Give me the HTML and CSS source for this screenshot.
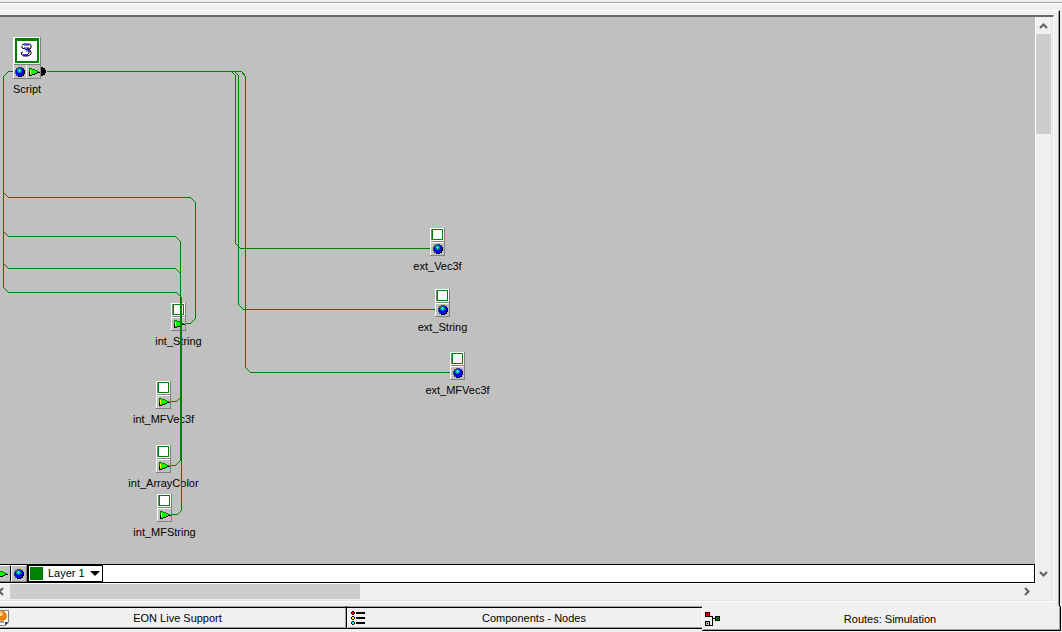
FILE: index.html
```html
<!DOCTYPE html>
<html lang="en">
<head>
<meta charset="utf-8">
<title>Routes: Simulation</title>
<link rel="stylesheet" href="styles.css">
</head>
<body>
<svg class="defs" width="0" height="0" aria-hidden="true">
  <symbol id="ball" viewBox="0 0 10 10">
    <path fill="#404060" d="M3 0h4v1h2v2h1v4h-1v2h-2v1h-4v-1h-2v-2h-1v-4h1v-2h2z"/>
    <path fill="#000" d="M8 2h1v1h1v4h-1v2h-2v1h-4v-1h4v-1h1z"/>
    <path fill="#00f" d="M3 1h4v1h1v1h1v3h-1v1h-1v2h-4v-1h-1v-1h-1v-4h1v-1h1z"/>
    <path fill="#008080" d="M3 1h3v1h1v3h-1v1h-3v-1h-1v-3h1z"/>
    <path fill="#0ff" d="M3 3h1v-1h1v1h1v1h-1v1h-1v-1h-1z"/>
  </symbol>
  <symbol id="arrow" viewBox="0 0 11 10">
    <path fill="#008000" d="M0 1h3v1h3v1h2v1h2v1h-10z"/>
    <path fill="#000" d="M0 5h11v1h-3v1h-2v1h-3v1h-3z"/>
    <path fill="#0f0" d="M1 2h2v1h3v1h2v2h-2v1h-3v1h-2z"/>
    <path fill="#ff0" d="M1 3h1v4h-1z"/>
  </symbol>
  <symbol id="box" viewBox="0 0 15 28">
    <path fill="#808080" d="M0 0h15v28h-15z"/>
    <path fill="#fff" d="M0 0h14v27h-14z"/>
    <path fill="#808080" d="M1 1h12v11h-12z"/>
    <path fill="#008000" d="M2 1h11v11h-11z"/>
    <path fill="#fff" d="M3 2h9v9h-9z"/>
    <path fill="#808080" d="M1 13h13v1h-13z"/>
    <path fill="#c0c0c0" d="M1 15h13v12h-13z"/>
  </symbol>
  <symbol id="in-node" viewBox="0 0 15 28">
    <use href="#box" width="15" height="28"/>
    <use href="#ball" x="3" y="16" width="10" height="10"/>
  </symbol>
  <symbol id="out-node" viewBox="0 0 15 28">
    <use href="#box" width="15" height="28"/>
    <use href="#arrow" x="3" y="16" width="11" height="10"/>
  </symbol>
</svg>

<div class="window">
  <div class="top-edge"></div>
  <main class="panel">
    <div class="view">
      <section class="canvas" aria-label="Routes">
        <div class="node script">
          <svg width="34" height="42" shape-rendering="crispEdges" aria-hidden="true">
            <path fill="#808080" d="M0 0h28v42h-28z"/>
            <path fill="#fff" d="M0 0h27v41h-27z"/>
            <path fill="#008000" d="M2 1h24v25h-24z"/>
            <path fill="#fff" d="M4 4h20v20h-20z"/>
            <path fill="#808080" d="M1 27h26v1h-26z"/>
            <path fill="#c0c0c0" d="M1 28h12v13h-12zM14 28h13v13h-13z"/>
            <g fill="none" stroke="#808080" stroke-width="1" shape-rendering="auto">
              <path stroke="#000" d="M9 8l2-1h5l2 1v3l-2 1M9 9v2l3 1 4 1v3l-2 2h-5l-1-2 2-1M14 11l3 2 1 2v2l-3 2h-5"/>
              <path stroke="#00f" d="M11 8h5M11 11h5M13 14h4M10 18h5"/>
            </g>
            <use href="#ball" x="2" y="30" width="10" height="10"/>
            <use href="#arrow" x="16" y="30" width="11" height="10"/>
            <path fill="#000" d="M28 30h2v1h2v2h1v3h-1v2h-2v1h-2z"/>
          </svg>
          <span>Script</span>
        </div>
        <div class="node ext-vec"><svg width="15" height="28" shape-rendering="crispEdges"><use href="#in-node"/></svg><span>ext_Vec3f</span></div>
        <div class="node ext-string"><svg width="15" height="28" shape-rendering="crispEdges"><use href="#in-node"/></svg><span>ext_String</span></div>
        <div class="node ext-mfvec"><svg width="15" height="28" shape-rendering="crispEdges"><use href="#in-node"/></svg><span>ext_MFVec3f</span></div>
        <div class="node int-string"><svg width="15" height="28" shape-rendering="crispEdges"><use href="#out-node"/></svg><span>int_String</span></div>
        <div class="node int-mfvec"><svg width="15" height="28" shape-rendering="crispEdges"><use href="#out-node"/></svg><span>int_MFVec3f</span></div>
        <div class="node int-color"><svg width="15" height="28" shape-rendering="crispEdges"><use href="#out-node"/></svg><span>int_ArrayColor</span></div>
        <div class="node int-mfstring"><svg width="15" height="28" shape-rendering="crispEdges"><use href="#out-node"/></svg><span>int_MFString</span></div>
        <svg class="routes" shape-rendering="crispEdges" aria-hidden="true">
          <g transform="translate(.5 -16.5)" fill="none" stroke="#008000">
            <path d="M46 71H241L245 76V367L250 372H449"/>
            <path d="M231 71L235 75V243L240 248H429"/>
            <path d="M234 71L238 75V304L243 309H434"/>
            <path d="M12 71H8L3 76V287L8 292H176L181 297V510L177 514H170"/>
            <path d="M3 192L8 197H190L195 202V318L190 323H185"/>
            <path d="M3 231L8 236H175L180 241V460L175 465H169"/>
            <path d="M3 263L8 268H175L180 273"/>
            <path d="M180 397L176 401H169"/>
          </g>
        </svg>
      </section>
      <div class="layer-bar">
        <button class="port out" aria-label="Outputs"><svg width="11" height="10" shape-rendering="crispEdges"><use href="#arrow"/></svg></button>
        <button class="port" aria-label="Inputs"><svg width="10" height="10" shape-rendering="crispEdges"><use href="#ball"/></svg></button>
        <div class="layer">
          <span class="swatch"></span>
          <select aria-label="Layer"><option>Layer 1</option></select>
          <svg width="10" height="5" aria-hidden="true"><path d="M0 0h10l-5 5z"/></svg>
        </div>
      </div>
      <div class="vscroll">
        <button aria-label="Scroll up"><svg width="9" height="7"><path d="M1 6l3.500-3.500 3.500 3.500"/></svg></button>
        <div class="vthumb"></div>
        <button class="end" aria-label="Scroll down"><svg width="9" height="7"><path d="M1 1l3.500 3.500 3.500-3.500"/></svg></button>
      </div>
      <div class="hscroll">
        <button aria-label="Scroll left"><svg width="7" height="9"><path d="M5 1l-3.500 3.500 3.500 3.500"/></svg></button>
        <div class="hthumb"></div>
        <button class="end" aria-label="Scroll right"><svg width="7" height="9"><path d="M2 1l3.500 3.500-3.500 3.500"/></svg></button>
      </div>
    </div>
  </main>
  <nav class="tabs" role="tablist">
    <button class="tab support" role="tab">
      <svg width="9" height="16" aria-hidden="true">
        <path fill="#fff" stroke="#808080" d="M-1 .5h9.500v11l-4 4h-6z"/>
        <path fill="#404040" d="M9 12l-4 4v-4z"/>
        <circle cx="2" cy="6" r="5" fill="#f08000"/>
        <circle cx="1" cy="4" r="2" fill="#ffd080"/>
        <path fill="#a0a0a0" d="M0 11h4v2h-4z"/>
      </svg>
      <span>EON Live Support</span>
    </button>
    <button class="tab components" role="tab">
      <svg width="15" height="15" shape-rendering="crispEdges" aria-hidden="true">
        <path d="M1 0h2v1h1v2h-1v1h-2v-1h-1v-2h1zM1 5h2v1h1v2h-1v1h-2v-1h-1v-2h1zM1 10h2v1h1v2h-1v1h-2v-1h-1v-2h1zM5 1h9v2h-9zM5 6h9v2h-9zM5 11h9v2h-9z"/>
        <path fill="#f00" d="M1 1h2v2h-2z"/><path fill="#ff0" d="M1 6h2v2h-2z"/><path fill="#0ff" d="M1 11h2v2h-2z"/>
      </svg>
      <span>Components - Nodes</span>
    </button>
    <button class="tab active" role="tab" aria-selected="true">
      <svg width="15" height="15" shape-rendering="crispEdges" aria-hidden="true">
        <path d="M0 0h5v5h-5zM0 9h5v5h-5zM10 4h5v5h-5zM5 4h3v2h2v1h-2v7h-3v-1h2v-8h-2z"/>
        <path fill="#f00" d="M1 1h3v3h-3z"/><path fill="#c0c0c0" d="M1 10h3v3h-3z"/><path fill="#008000" d="M11 5h3v3h-3z"/>
        <path d="M2 2h1v1h-1zM2 11h1v1h-1zM12 6h1v1h-1z"/>
      </svg>
      <span>Routes: Simulation</span>
    </button>
  </nav>
</div>
</body>
</html>
```
FILE: styles.css
```css
* { box-sizing: border-box; }
body {
  margin: 0;
  background: #f0f0f0;
  color: #000;
  font: 11px/13px "Liberation Sans", Arial, sans-serif;
}
button, select {
  font: inherit;
  color: inherit;
  margin: 0;
  padding: 0;
  border: 0;
  background: none;
}
svg { display: block; flex: none; }
.defs { position: absolute; }
.window {
  height: 100vh;
  display: flex;
  flex-direction: column;
  overflow: hidden;
  padding: 2px 2px 1px 0;
}
.top-edge {
  height: 8px;
  flex: none;
  margin-right: -2px;
  border-top: 1px solid #a0a0a0;
  box-shadow: inset 0 1px #fff;
}
.panel {
  flex: 1;
  min-height: 0;
  display: flex;
  padding: 4px 5px 4px 0;
  border-top: 1px solid #fff;
  border-right: 1px solid #000;
  box-shadow: inset -1px 0 #a0a0a0;
}
.view {
  flex: 1;
  min-width: 0;
  display: grid;
  grid-template-columns: minmax(0, 1fr) 17px;
  grid-template-rows: minmax(0, 1fr) 19px 17px;
  border-top: 2px solid #696969;
  border-right: 1px solid #fff;
  border-bottom: 1px solid #fff;
  box-shadow: inset -1px -1px #e3e3e3;
  padding: 0 1px 1px 0;
}
.canvas {
  position: relative;
  overflow: hidden;
  background: #c0c0c0;
}
.routes {
  position: absolute;
  inset: 0;
  width: 100%;
  height: 100%;
  pointer-events: none;
}
.node {
  position: absolute;
  width: 15px;
  display: flex;
  flex-direction: column;
  align-items: center;
  gap: 4px;
  white-space: nowrap;
}
.script { left: 13px; top: 20px; width: 28px; }
.script svg { align-self: flex-start; }
.ext-vec { left: 430px; top: 211px; }
.ext-string { left: 435px; top: 272px; }
.ext-mfvec { left: 450px; top: 335px; }
.int-string { left: 171px; top: 286px; }
.int-mfvec { left: 156px; top: 364px; }
.int-color { left: 156px; top: 428px; }
.int-mfstring { left: 157px; top: 477px; }

.layer-bar {
  display: flex;
  background: #fff;
  border: solid #000;
  border-width: 1px 1px 1px 0;
}
.port {
  width: 16px;
  display: grid;
  place-items: center;
  background: #c0c0c0;
  border: 1px solid #fff;
  border-right-color: #808080;
  border-bottom-color: #808080;
}
.port.out {
  width: 11px;
  justify-content: end;
  padding-right: 2px;
  border-left: 0;
  border-right-color: #000;
}
.layer {
  display: grid;
  grid-template-columns: 13px 1fr 10px;
  align-items: center;
  width: 76px;
  padding: 0 2px 0 1px;
  border: solid #000;
  border-width: 1px 1px 1px 2px;
}
.swatch { height: 13px; background: #008000; }
.layer select {
  grid-area: 1 / 2 / 2 / 4;
  appearance: none;
  padding-left: 5px;
}
.layer svg { grid-area: 1 / 3; pointer-events: none; }

.vscroll {
  grid-area: 1 / 2 / 3 / 3;
  display: flex;
  flex-direction: column;
  border-left: 1px solid #fff;
}
.vscroll button, .hscroll button {
  width: 17px;
  height: 17px;
  flex: none;
  display: grid;
  place-items: center;
}
.vscroll button { width: 15px; }
.hscroll button { height: 15px; }
.vscroll path, .hscroll path { fill: none; stroke: #606060; stroke-width: 2; }
.vthumb { height: 100px; margin-right: 1px; background: #cdcdcd; }
.vscroll .end { margin-top: auto; }
.hscroll {
  display: flex;
  border-top: 1px solid #fff;
  margin-left: -7px;
}
.hthumb { width: 350px; margin-bottom: 1px; background: #cdcdcd; }
.hscroll .end { margin-left: auto; }

.tabs {
  flex: none;
  height: 25px;
  display: grid;
  grid-template-columns: 347fr 355fr 359fr;
  margin-right: -1px;
}
.tab {
  display: flex;
  align-items: center;
  height: 23px;
  border: solid #000;
  border-width: 0 1px 1px 0;
  box-shadow: inset 0 1px #a0a0a0, inset 0 2px #000, inset -1px -1px #a0a0a0;
  padding-top: 2px;
}
.tab span { flex: 1; }
.components { border-right: 0; padding-left: 4px; box-shadow: inset 0 1px #a0a0a0, inset 0 2px #000, inset 1px 0 #fff, inset 0 -1px #a0a0a0; }
.active {
  height: 25px;
  padding-left: 3px;
  border-width: 0 1px 1px 0;
  box-shadow: inset 1px 0 #fff, inset -1px -1px #a0a0a0;
}
```
